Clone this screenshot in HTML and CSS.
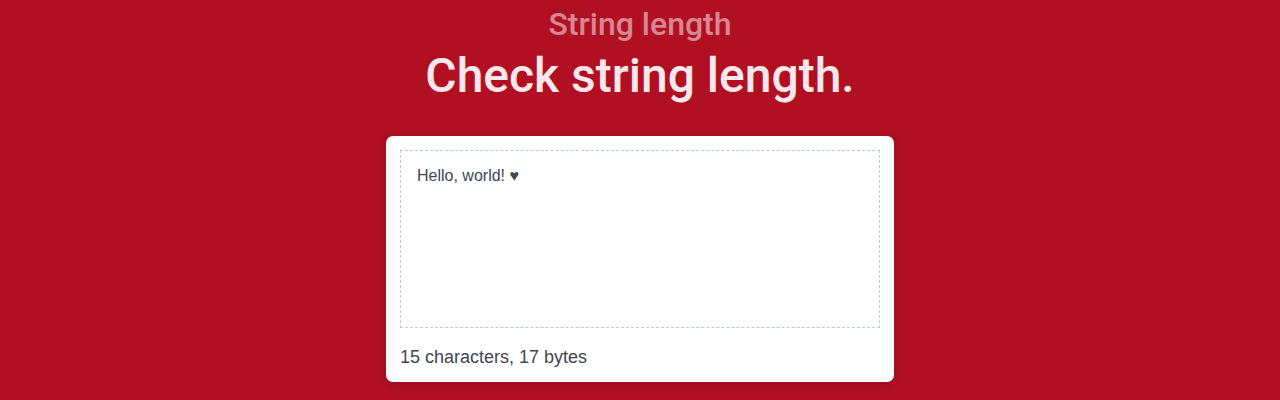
FILE: index.html
```html
<!DOCTYPE html>
<html>
<head>
<meta charset="utf-8">
<link rel="stylesheet" href="styles.css">
</head>
<body>
<header class="hero">
  <h2 class="eyebrow">String length</h2>
  <h1 class="title">Check string length.</h1>
</header>
<main class="card">
  <div class="input">Hello, world! ♥</div>
  <p class="result">15 characters, 17 bytes</p>
</main>
</body>
</html>
```

FILE: styles.css
```css
html, body {
  margin: 0;
  padding: 0;
}
body {
  background: #b01022;
  font-family: "Liberation Sans", Arial, sans-serif;
  height: 400px;
  overflow: hidden;
}
.hero {
  display: flex;
  flex-direction: column;
  align-items: center;
  font-family: Roboto, sans-serif;
  font-weight: 500;
}
.eyebrow {
  margin: 5px 0 0;
  font-size: 32px;
  line-height: 38px;
  font-weight: 500;
  color: rgba(255, 255, 255, 0.5);
}
.title {
  margin: 3px 0 0;
  font-size: 48px;
  line-height: 60px;
  font-weight: 500;
  color: #f9e7eb;
}
.card {
  width: 480px;
  margin: 30px auto 0;
  background: #fff;
  border-radius: 7px;
  padding: 14px 14px 14px;
  box-shadow: 0 2px 8px rgba(0, 0, 0, 0.15);
}
.input {
  height: 178px;
  border: 1px dashed #b9cad8;
  padding: 15px 16px;
  box-sizing: border-box;
  font-size: 16px;
  line-height: 20px;
  color: #3f4650;
}
.result {
  margin: 18px 0 0;
  font-size: 18px;
  line-height: 22px;
  color: #3f4650;
}
```
